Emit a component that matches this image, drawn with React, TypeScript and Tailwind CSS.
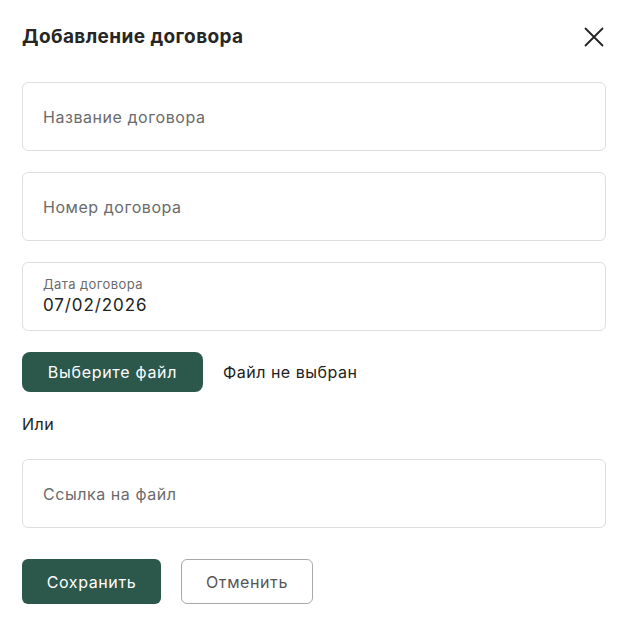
import React from 'react';

const Field: React.FC<{ placeholder: string }> = ({ placeholder }) => (
  <div className="h-[69px] w-full rounded-[6px] border border-[#dedede] bg-white px-[20px] flex items-center">
    <span className="text-[16px] tracking-[0.55px] text-[#6b6b6b]">{placeholder}</span>
  </div>
);

const App: React.FC = () => {
  return (
    <div
      className="min-h-[633px] w-[632px] bg-white pl-[22px] pr-[26px] pt-[22px] text-[#222]"
      style={{ fontFamily: 'Inter, "Open Sans", sans-serif' }}
    >
      {/* Header */}
      <div className="flex h-[30px] items-center justify-between">
        <h2 className="text-[19px] font-bold text-[#262626] tracking-[0.4px]">Добавление договора</h2>
        <button className="mr-[2px] text-[#222]">
          <svg width="20" height="20" viewBox="0 0 20 20" fill="none" stroke="currentColor" strokeWidth="1.8" strokeLinecap="round">
            <path d="M1.5 1.5L18.5 18.5M18.5 1.5L1.5 18.5" />
          </svg>
        </button>
      </div>

      <div className="mt-[30px] flex flex-col gap-[21px]">
        <Field placeholder="Название договора" />
        <Field placeholder="Номер договора" />
        <div className="h-[69px] w-full rounded-[6px] border border-[#dedede] bg-white px-[20px] pt-[12px]">
          <div className="text-[13px] leading-[18px] tracking-[0.4px] text-[#6b6b6b]">Дата договора</div>
          <div className="text-[17px] leading-[24px] tracking-[0.9px] text-[#222]">07/02/2026</div>
        </div>
      </div>

      {/* File */}
      <div className="mt-[21px] flex items-center gap-[20px]">
        <button className="h-[40px] w-[181px] rounded-[8px] bg-[#2c584b] text-[16px] tracking-[0.7px] text-white">
          Выберите файл
        </button>
        <span className="text-[16px] tracking-[0.5px] text-[#222]">Файл не выбран</span>
      </div>

      <div className="mt-[20px] text-[16px] leading-[24px] tracking-[0.5px] text-[#222]">Или</div>

      <div className="mt-[23px]">
        <Field placeholder="Ссылка на файл" />
      </div>

      {/* Actions */}
      <div className="mt-[31px] flex items-center gap-[20px]">
        <button className="h-[45px] w-[139px] rounded-[6px] bg-[#2c584b] text-[16px] tracking-[0.6px] text-white">
          Сохранить
        </button>
        <button className="h-[45px] w-[132px] rounded-[6px] border border-[#aaaaaa] bg-white text-[16px] tracking-[0.6px] text-[#555]">
          Отменить
        </button>
      </div>
    </div>
  );
};

export default App;
